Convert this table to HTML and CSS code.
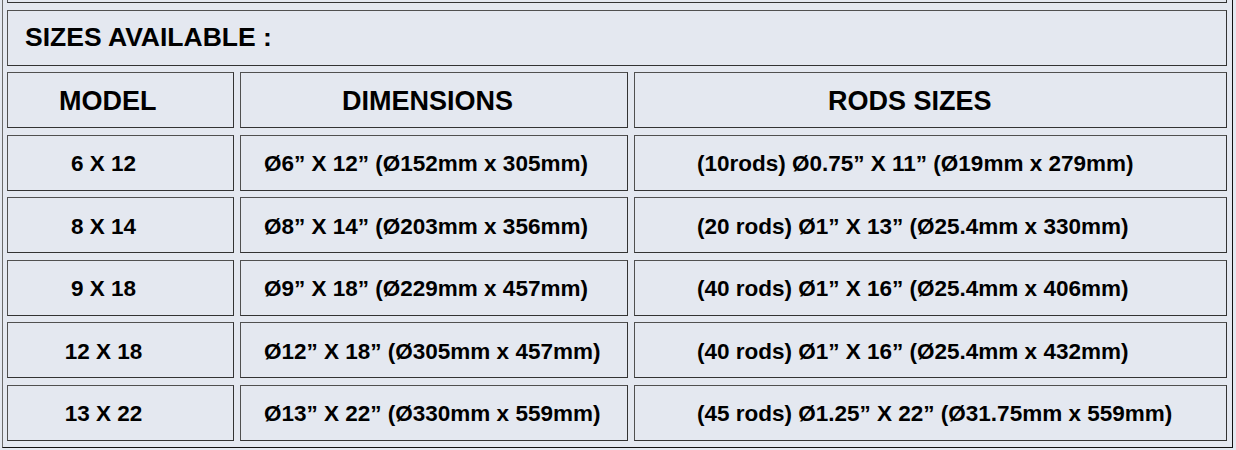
FILE: index.html
```html
<!DOCTYPE html>
<html lang="en">
<head>
<meta charset="utf-8">
<title>Sizes available</title>
<link rel="stylesheet" href="styles.css">
</head>
<body>
<div class="sizes">
  <div class="cell span"></div>
  <div class="cell span title">SIZES AVAILABLE :</div>

  <div class="cell head h-model">MODEL</div>
  <div class="cell head h-dim">DIMENSIONS</div>
  <div class="cell head h-rods">RODS SIZES</div>

  <div class="cell model">6 X 12</div>
  <div class="cell dim">Ø6” X 12” (Ø152mm x 305mm)</div>
  <div class="cell rods">(10rods) Ø0.75” X 11” (Ø19mm x 279mm)</div>

  <div class="cell model">8 X 14</div>
  <div class="cell dim">Ø8” X 14” (Ø203mm x 356mm)</div>
  <div class="cell rods">(20 rods) Ø1” X 13” (Ø25.4mm x 330mm)</div>

  <div class="cell model">9 X 18</div>
  <div class="cell dim">Ø9” X 18” (Ø229mm x 457mm)</div>
  <div class="cell rods">(40 rods) Ø1” X 16” (Ø25.4mm x 406mm)</div>

  <div class="cell model">12 X 18</div>
  <div class="cell dim">Ø12” X 18” (Ø305mm x 457mm)</div>
  <div class="cell rods">(40 rods) Ø1” X 16” (Ø25.4mm x 432mm)</div>

  <div class="cell model">13 X 22</div>
  <div class="cell dim">Ø13” X 22” (Ø330mm x 559mm)</div>
  <div class="cell rods">(45 rods) Ø1.25” X 22” (Ø31.75mm x 559mm)</div>
</div>
</body>
</html>
```

FILE: styles.css
```css
html, body {
  margin: 0;
  background: #e4e8f0;
}

body {
  font-family: "Liberation Sans", Arial, sans-serif;
  font-weight: bold;
  color: #000;
  overflow: hidden;
}

.sizes {
  display: grid;
  width: max-content;
  grid-template-columns: 227px 388px 593px;
  grid-auto-rows: 56px;
  column-gap: 6px;
  row-gap: 6.5px;
  margin: -58px 0 0 2px;
  padding: 4px 5px 6px 4px;
  border: 1px solid;
  border-color: #6a6a6a #111 #111 #6a6a6a;
  background: #e4e8f0;
}

.cell {
  display: flex;
  align-items: center;
  box-sizing: border-box;
  border: 1px solid;
  border-color: #505050 #333 #333 #505050;
  background: #e4e8f0;
  font-size: 22.5px;
  white-space: nowrap;
  padding-top: 3px;
}

.span {
  grid-column: 1 / -1;
}

.title {
  font-size: 26.5px;
  padding-left: 17px;
  padding-top: 0;
}

.head {
  font-size: 27px;
  padding-top: 2px;
}

.h-model { padding-left: 51px; }
.h-dim { padding-left: 101px; }
.h-rods { padding-left: 193px; }

.model {
  justify-content: center;
  padding-right: 34px;
}

.dim { padding-left: 23px; }
.rods { padding-left: 62px; }
```
